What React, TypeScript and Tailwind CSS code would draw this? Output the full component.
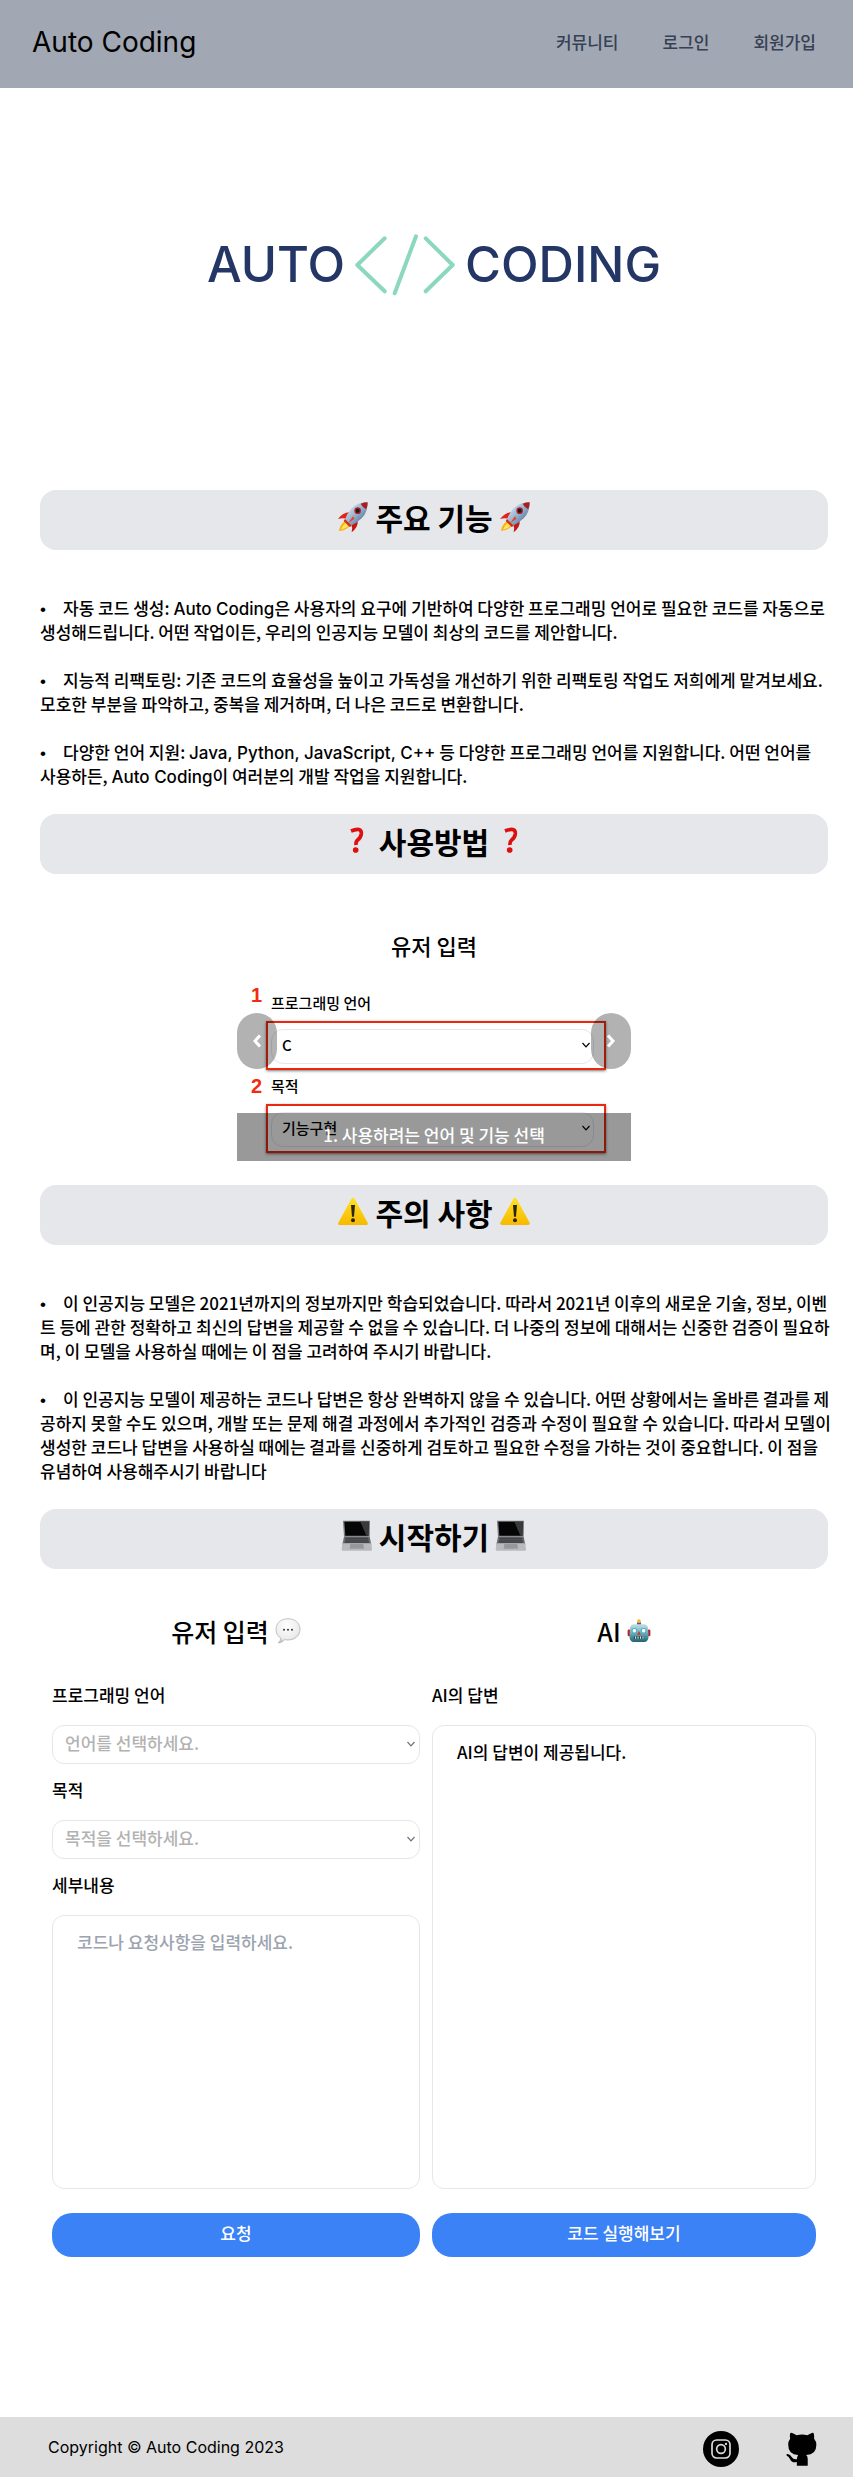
import type { ReactNode } from "react";

const TITLE_ICON = "h-8 w-8 shrink-0";

function Rocket() {
  return (
    <svg viewBox="0 0 96 96" className={TITLE_ICON} aria-hidden="true">
      <defs>
        <linearGradient id="hull" x1="0" y1="0" x2="1" y2="1">
          <stop offset="0" stopColor="#eef3f8" />
          <stop offset="0.45" stopColor="#9fb9d3" />
          <stop offset="1" stopColor="#2f5580" />
        </linearGradient>
      </defs>
      <path d="M24 60 Q8 72 6 90 Q24 90 38 76 Z" fill="#f9b115" />
      <path d="M26 66 Q15 75 12 86 Q24 84 34 76 Z" fill="#ffe75a" />
      <path d="M36 34 Q18 34 3 54 Q18 50 32 54 Z" fill="#e2231a" />
      <path d="M62 60 Q64 78 44 94 Q48 80 42 68 Z" fill="#c4170f" />
      <path d="M92 4 Q62 4 44 22 Q28 40 22 60 L38 76 Q58 68 74 52 Q92 34 92 4 Z" fill="url(#hull)" />
      <path d="M92 4 Q80 4 71 8 Q76 19 88 25 Q92 16 92 4 Z" fill="#a81f22" />
      <circle cx="62" cy="29" r="10" fill="#b72026" />
      <circle cx="62" cy="29" r="6" fill="#171d2b" />
      <path d="M24 54 L44 74 L38 78 L20 60 Z" fill="#d92a1b" />
      <path d="M48 46 L34 66 L52 53 Z" fill="#f03a22" />
    </svg>
  );
}

function QuestionMark() {
  return (
    <svg viewBox="0 0 96 96" className={TITLE_ICON} aria-hidden="true">
      <path
        d="M30 18 Q62 5 61 26 Q60 38 50 45 Q44 50 45 60"
        fill="none"
        stroke="#de0f0f"
        strokeWidth="11"
      />
      <circle cx="44" cy="75" r="8.5" fill="#de0f0f" />
    </svg>
  );
}

function Warning() {
  return (
    <svg viewBox="0 0 96 96" className={TITLE_ICON} aria-hidden="true">
      <defs>
        <linearGradient id="sign" x1="0" y1="0" x2="0" y2="1">
          <stop offset="0" stopColor="#ffe11f" />
          <stop offset="1" stopColor="#f7b900" />
        </linearGradient>
      </defs>
      <path
        d="M43 9 Q48 2 53 9 L92 80 Q94 87 87 87 H9 Q2 87 4 80 Z"
        fill="url(#sign)"
      />
      <path d="M42 27 H54 L51 62 H45 Z" fill="#2b2410" />
      <circle cx="48" cy="73" r="6" fill="#2b2410" />
    </svg>
  );
}

function Laptop() {
  return (
    <svg viewBox="0 0 96 96" className={TITLE_ICON} aria-hidden="true">
      <path d="M6 2 H87 L86 50 H9 Z" fill="#77797b" />
      <path d="M10 5 H83 L82 47 H13 Z" fill="#050505" />
      <path d="M58 5 H83 L82 47 H76 Z" fill="#3a3a3c" />
      <path d="M9 50 H86 L91 74 H4 Z" fill="#68696b" />
      <path d="M14 53 H81 L84 68 H11 Z" fill="#3d3e40" />
      <path d="M12 58 H83 M11 63 H84" stroke="#6c6d6f" strokeWidth="1.5" />
      <path d="M4 70 H91 L93 89 Q93 92 89 92 H6 Q2 92 2 89 Z" fill="#b9babc" />
      <path d="M28 72 H67 L69 86 H26 Z" fill="#97989a" />
    </svg>
  );
}

function SpeechBubble() {
  return (
    <svg viewBox="0 0 78 78" className="h-[26px] w-[26px] shrink-0" aria-hidden="true">
      <defs>
        <radialGradient id="bubble" cx="0.45" cy="0.3" r="0.75">
          <stop offset="0" stopColor="#ffffff" />
          <stop offset="0.7" stopColor="#ececec" />
          <stop offset="1" stopColor="#b5b5b5" />
        </radialGradient>
      </defs>
      <path
        d="M39 2 C60 2 75 15 75 34 C75 54 59 66 39 66 Q34 66 29 65 Q22 74 10 75 Q17 68 17 60 Q3 52 3 34 C3 15 18 2 39 2 Z"
        fill="url(#bubble)"
        stroke="#a9a9a9"
        strokeWidth="2"
      />
      <circle cx="27" cy="35" r="3" fill="#333" />
      <circle cx="39" cy="35" r="3" fill="#333" />
      <circle cx="51" cy="35" r="3" fill="#333" />
    </svg>
  );
}

function Robot() {
  return (
    <svg viewBox="0 0 78 78" className="h-6 w-6 shrink-0" aria-hidden="true">
      <defs>
        <linearGradient id="face" x1="0" y1="0" x2="0" y2="1">
          <stop offset="0" stopColor="#bfe3e6" />
          <stop offset="0.5" stopColor="#6fadb8" />
          <stop offset="1" stopColor="#1d6173" />
        </linearGradient>
      </defs>
      <path d="M32 20 Q31 9 39 9 Q47 9 46 20 Z" fill="#5a4fa3" />
      <circle cx="39" cy="7" r="6" fill="#f7b52c" />
      <rect x="2" y="34" width="9" height="22" rx="4" fill="#b3272d" />
      <rect x="67" y="34" width="9" height="22" rx="4" fill="#b3272d" />
      <path
        d="M20 17 H58 Q66 18 68 28 L70 58 Q69 73 58 75 H20 Q9 73 8 58 L10 28 Q12 18 20 17 Z"
        fill="url(#face)"
      />
      <circle cx="24" cy="38" r="9" fill="#3fa7cf" />
      <circle cx="54" cy="38" r="9" fill="#3fa7cf" />
      <circle cx="24" cy="38" r="6" fill="#f4fcff" />
      <circle cx="54" cy="38" r="6" fill="#f4fcff" />
      <path d="M39 39 L45 51 H33 Z" fill="#d3342c" />
      <rect x="22" y="56" width="34" height="9" rx="4" fill="#2e4951" />
      <path d="M28 57 V64 M36 57 V64 M44 57 V64 M52 57 V64" stroke="#d8e8ea" strokeWidth="3.5" />
    </svg>
  );
}

function CodeMark() {
  return (
    <svg viewBox="0 0 100 62" className="h-[62px] w-[100px] shrink-0" aria-hidden="true">
      <path
        d="M29.7 4.3 L2.3 31 L29.7 57.3 M61 2.3 L39.7 59.3 M70.7 4.3 L97.7 31 L70.7 57.3"
        fill="none"
        stroke="#8bd8bd"
        strokeWidth="4"
        strokeLinecap="round"
        strokeLinejoin="round"
      />
    </svg>
  );
}

function ChevronDown({ className }: { className: string }) {
  return (
    <svg viewBox="0 0 10 10" className={className} aria-hidden="true">
      <path d="M1.5 3 L5 6.8 L8.5 3" fill="none" stroke="currentColor" strokeWidth="1.2" />
    </svg>
  );
}

function Instagram() {
  return (
    <svg viewBox="0 0 108 108" className="h-9 w-9" aria-hidden="true">
      <circle cx="54" cy="54" r="54" fill="#000" />
      <g fill="none" stroke="#ddd" strokeWidth="5">
        <rect x="27" y="27" width="54" height="54" rx="14" />
        <circle cx="54" cy="54" r="13" />
      </g>
      <circle cx="69" cy="39" r="3.5" fill="#ddd" />
    </svg>
  );
}

function Octocat() {
  return (
    <svg viewBox="0 0 100 112" className="h-9 w-8" aria-hidden="true">
      <path
        d="M16 8 Q17 4 22 6 Q30 9 36 13 Q54 9 70 13 Q77 9 84 6 Q89 4 90 8 Q92 16 91 24 Q98 32 98 43 Q98 75 66 75 Q71 79 71 87 V108 H37 V97 Q20 100 16 88 Q12 79 5 76 Q3 72 8 72 Q17 73 21 81 Q26 90 37 88 Q38 79 41 75 Q10 74 10 43 Q10 32 16 24 Q14 16 16 8 Z"
        fill="#000"
      />
    </svg>
  );
}

function SectionTitle({ icon, children }: { icon: ReactNode; children: ReactNode }) {
  return (
    <h2 className="flex h-[60px] items-center justify-center gap-1.5 rounded-2xl bg-[#e5e7eb] pb-1.5 text-3xl font-bold">
      {icon}
      <span>{children}</span>
      {icon}
    </h2>
  );
}

// Latin runs are set in Inter, Hangul stays in the page font.
const LATIN = /([A-Za-z][A-Za-z+, ]*[A-Za-z+])/;

function Notes({ items }: { items: string[] }) {
  return (
    <ul className="mt-[46px] -mr-2 mb-[26px] flex flex-col gap-6">
      {items.map((item) => (
        <li key={item} className="whitespace-pre-line">
          <span className="inline-block w-[23px] font-['Liberation_Sans'] leading-none">•</span>
          {item.split(LATIN).map((part, i) =>
            i % 2 ? (
              <span key={i} className="font-['Inter',sans-serif] leading-none">
                {part}
              </span>
            ) : (
              part
            ),
          )}
        </li>
      ))}
    </ul>
  );
}

function SlideField({ step, stepTop, label, value }: { step: string; stepTop: string; label: string; value: string }) {
  return (
    <div className="relative mr-[25px] ml-[29px]">
      <span
        className={`absolute -left-[15px] font-['Liberation_Sans'] text-xl leading-6 font-bold text-[#f32a0e] ${stepTop}`}
      >
        {step}
      </span>
      <div className="pt-1 pb-1.5 pl-[5px] text-[15px] leading-6">{label}</div>
      <div className="border-2 border-[#e8290f] pt-1.5 pr-2.5 pb-1 pl-[3px] shadow-sm shadow-black/40">
        <div className="flex h-[35px] items-center justify-between rounded-xl border border-[#e5e7eb] pr-0.5 pb-1 pl-2.5 text-[15px]">
          {value}
          <ChevronDown className="h-2.5 w-2.5" />
        </div>
      </div>
    </div>
  );
}

function Carousel() {
  const arrow =
    "absolute top-[91px] flex h-14 w-10 items-center justify-center rounded-[20px] bg-black/30 text-white";
  return (
    <div className="relative mx-auto mt-12 mb-6 w-1/2">
      <div className="pt-[9px] pb-2">
        <div className="mb-7 text-center text-[22px] leading-7">유저 입력</div>
        <SlideField step="1" stepTop="-top-1" label="프로그래밍 언어" value="C" />
        <SlideField step="2" stepTop="top-1" label="목적" value="기능구현" />
      </div>
      <button type="button" aria-label="이전" className={`${arrow} left-0`}>
        <svg viewBox="0 0 10 14" className="h-3.5 w-2.5" aria-hidden="true">
          <path d="M8 1.5 L3 7 L8 12.5" fill="none" stroke="currentColor" strokeWidth="3" />
        </svg>
      </button>
      <button type="button" aria-label="다음" className={`${arrow} right-0`}>
        <svg viewBox="0 0 10 14" className="h-3.5 w-2.5" aria-hidden="true">
          <path d="M2 1.5 L7 7 L2 12.5" fill="none" stroke="currentColor" strokeWidth="3" />
        </svg>
      </button>
      <p className="absolute inset-x-0 bottom-0 flex h-12 items-center justify-center bg-black/40 pb-1 text-[17px] text-white">
        1. 사용하려는 언어 및 기능 선택
      </p>
    </div>
  );
}

function SelectField({ id, label, placeholder, options }: { id: string; label: string; placeholder: string; options: string[] }) {
  return (
    <>
      <label htmlFor={id}>{label}</label>
      <div className="relative mt-[18px] mb-3.5">
        <select
          id={id}
          defaultValue=""
          className="block h-[39px] w-full appearance-none rounded-xl border border-[#e5e7eb] bg-white pr-6 pb-1 pl-3 text-[#b2b2b2]"
        >
          <option value="" disabled>
            {placeholder}
          </option>
          {options.map((o) => (
            <option key={o}>{o}</option>
          ))}
        </select>
        <ChevronDown className="pointer-events-none absolute top-3.5 right-1 h-2.5 w-2.5 text-gray-500" />
      </div>
    </>
  );
}

const features = [
  "자동 코드 생성: Auto Coding은 사용자의 요구에 기반하여 다양한 프로그래밍 언어로 필요한 코드를 자동으로\n생성해드립니다. 어떤 작업이든, 우리의 인공지능 모델이 최상의 코드를 제안합니다.",
  "지능적 리팩토링: 기존 코드의 효율성을 높이고 가독성을 개선하기 위한 리팩토링 작업도 저희에게 맡겨보세요.\n모호한 부분을 파악하고, 중복을 제거하며, 더 나은 코드로 변환합니다.",
  "다양한 언어 지원: Java, Python, JavaScript, C++ 등 다양한 프로그래밍 언어를 지원합니다. 어떤 언어를\n사용하든, Auto Coding이 여러분의 개발 작업을 지원합니다.",
];

const cautions = [
  "이 인공지능 모델은 2021년까지의 정보까지만 학습되었습니다. 따라서 2021년 이후의 새로운 기술, 정보, 이벤\n트 등에 관한 정확하고 최신의 답변을 제공할 수 없을 수 있습니다. 더 나중의 정보에 대해서는 신중한 검증이 필요하\n며, 이 모델을 사용하실 때에는 이 점을 고려하여 주시기 바랍니다.",
  "이 인공지능 모델이 제공하는 코드나 답변은 항상 완벽하지 않을 수 있습니다. 어떤 상황에서는 올바른 결과를 제\n공하지 못할 수도 있으며, 개발 또는 문제 해결 과정에서 추가적인 검증과 수정이 필요할 수 있습니다. 따라서 모델이\n생성한 코드나 답변을 사용하실 때에는 결과를 신중하게 검토하고 필요한 수정을 가하는 것이 중요합니다. 이 점을\n유념하여 사용해주시기 바랍니다",
];

export default function App() {
  const submit = "h-11 w-full rounded-[20px] bg-[#3b82f6] pb-1 text-white";
  return (
    <div className="bg-white font-['Noto_Sans_CJK_KR',sans-serif] text-[17px] leading-6 font-medium text-black">
      <header className="flex h-[88px] items-center justify-between bg-[#a1a7b3] pr-[37px] pb-1 pl-8">
        <a href="#" className="font-['Inter','Noto_Sans_CJK_KR',sans-serif] text-[28px] leading-9 font-normal">
          Auto Coding
        </a>
        <nav className="flex gap-11 text-gray-700">
          <a href="#community">커뮤니티</a>
          <a href="#login">로그인</a>
          <a href="#signup">회원가입</a>
        </nav>
      </header>

      <main className="pr-[25px] pl-10">
        <div className="flex h-[402px] items-center justify-center gap-2.5 pb-12 font-['Inter',sans-serif] text-[49px] text-[#243665]">
          <span>AUTO</span>
          <CodeMark />
          <span>CODING</span>
        </div>

        <SectionTitle icon={<Rocket />}>주요 기능</SectionTitle>
        <Notes items={features} />

        <SectionTitle icon={<QuestionMark />}>사용방법</SectionTitle>
        <Carousel />

        <SectionTitle icon={<Warning />}>주의 사항</SectionTitle>
        <Notes items={cautions} />

        <SectionTitle icon={<Laptop />}>시작하기</SectionTitle>

        <div className="mx-3 mt-[46px] mb-40 grid grid-cols-[368fr_384fr] gap-3">
          <form className="flex flex-col" onSubmit={(e) => e.preventDefault()}>
            <h3 className="mb-9 flex items-center justify-center gap-1.5 text-[25px] leading-8">
              유저 입력
              <SpeechBubble />
            </h3>
            <SelectField
              id="language"
              label="프로그래밍 언어"
              placeholder="언어를 선택하세요."
              options={["C", "C++", "Java", "JavaScript", "Python"]}
            />
            <SelectField
              id="purpose"
              label="목적"
              placeholder="목적을 선택하세요."
              options={["기능구현", "리팩토링"]}
            />
            <label htmlFor="detail">세부내용</label>
            <textarea
              id="detail"
              placeholder="코드나 요청사항을 입력하세요."
              className="mt-[18px] mb-6 block h-[274px] w-full resize-none rounded-xl border border-[#e5e7eb] px-6 py-3.5 placeholder:text-[#9ca3af]"
            />
            <button type="submit" className={submit}>
              요청
            </button>
          </form>

          <div className="flex flex-col">
            <h3 className="mb-9 flex items-center justify-center gap-1.5 text-[25px] leading-8">
              AI
              <Robot />
            </h3>
            <h4>AI의 답변</h4>
            <div className="mt-[18px] mb-6 flex-1 rounded-xl border border-[#e5e7eb] px-6 py-3.5">
              AI의 답변이 제공됩니다.
            </div>
            <button type="button" className={submit}>
              코드 실행해보기
            </button>
          </div>
        </div>
      </main>

      <footer className="flex h-[60px] items-center justify-between bg-[#ddd] pr-9 pl-12">
        <p className="font-['Inter',sans-serif] text-base font-normal">Copyright © Auto Coding 2023</p>
        <div className="flex items-center gap-[46px] pt-1">
          <a href="#instagram" aria-label="Instagram">
            <Instagram />
          </a>
          <a href="#github" aria-label="GitHub">
            <Octocat />
          </a>
        </div>
      </footer>
    </div>
  );
}
